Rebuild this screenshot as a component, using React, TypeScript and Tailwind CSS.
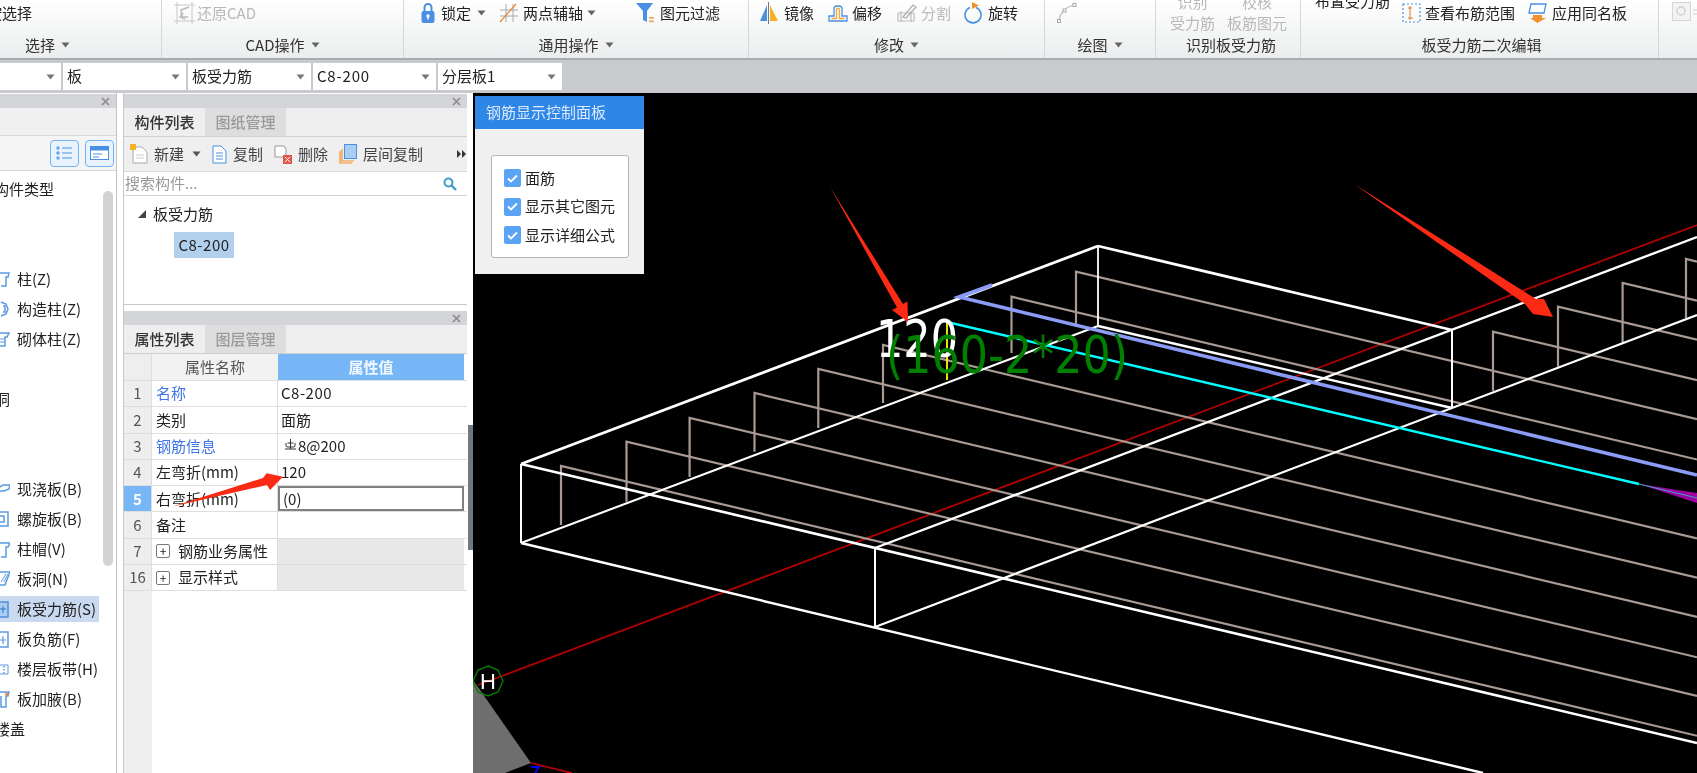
import React from "react";

const Caret = ({ c = "#666" }: { c?: string }) => (
  <svg width="9" height="6" viewBox="0 0 9 6" className="shrink-0"><path d="M0.5 0.5H8.5L4.5 5.5Z" fill={c} /></svg>
);

const Lock = () => (
  <svg width="14" height="22" viewBox="0 0 14 22"><path d="M3.5 10V5.5a3.5 3.5 0 0 1 7 0V10" fill="none" stroke="#4a90e2" strokeWidth="2" /><rect x="0.5" y="9" width="13" height="12" rx="2" fill="#4a90e2" /><circle cx="7" cy="14" r="1.7" fill="#fff" /><rect x="6.3" y="14" width="1.4" height="3.5" fill="#fff" /></svg>
);
const Axis = () => (
  <svg width="20" height="20" viewBox="0 0 20 20"><path d="M7 1V19M14 1V19M1 7H19M1 13H19" stroke="#a8a8a8" strokeWidth="1" /><path d="M1 19L17 1" stroke="#ef8a3c" strokeWidth="1.3" /></svg>
);
const Filter = () => (
  <svg width="20" height="22" viewBox="0 0 20 22"><path d="M0 1H17L11 9V20L7 18V9Z" fill="#4a90e2" /><rect x="13" y="15" width="5" height="1.6" fill="#f2a25c" /><rect x="13" y="18.5" width="5" height="1.6" fill="#f2a25c" /></svg>
);
const Mirror = () => (
  <svg width="20" height="22" viewBox="0 0 20 22"><path d="M8 3L1 19H8Z" fill="#4a90e2" /><path d="M11 3L19 19H11Z" fill="#f5b324" /><path d="M9.5 0V22" stroke="#777" strokeWidth="1" /></svg>
);
const Offset = () => (
  <svg width="20" height="20" viewBox="0 0 20 20"><path d="M1 18V13H6V6a3 3 0 0 1 3-3h2a3 3 0 0 1 3 3v7h5v5Z" fill="none" stroke="#4a90e2" strokeWidth="1.3" /><path d="M3.5 15.5H8.5V6.5a1 1 0 0 1 1-1h1a1 1 0 0 1 1 1v9h5" fill="none" stroke="#f2a93b" strokeWidth="1.3" /></svg>
);
const Split = () => (
  <svg width="22" height="20" viewBox="0 0 22 20"><path d="M2 10H18V18H2Z M5 8V19 M15 8V19" fill="none" stroke="#bdbdbd" strokeWidth="1.2" /><path d="M7 14L17 2L20 4L10 15Z" fill="none" stroke="#b0b0b0" strokeWidth="1.3" /></svg>
);
const Rotate = () => (
  <svg width="20" height="22" viewBox="0 0 20 22"><path d="M6 5.5a8 8 0 1 0 6 0" fill="none" stroke="#4a90e2" strokeWidth="1.6" /><path d="M8 0L15 3.5L8 7Z" fill="#f2922e" /></svg>
);
const Arc = () => (
  <svg width="22" height="22" viewBox="0 0 22 22"><path d="M3 18C4 11 10 5 17 3" fill="none" stroke="#bdbdbd" strokeWidth="1.2" /><g fill="#fff" stroke="#aaa"><rect x="1.5" y="17.5" width="3" height="3" /><rect x="7" y="7" width="3" height="3" /><rect x="17" y="1.5" width="3" height="3" /></g></svg>
);
const CadIcon = () => (
  <svg width="21" height="22" viewBox="0 0 21 22"><path d="M3 0V22M18 0V22M0 3H21M0 19H21" stroke="#c8c8c8" strokeWidth="1" /><path d="M15 5L7 8L8 15H14" fill="none" stroke="#bbb" strokeWidth="1.5" /><path d="M9 11L6 15L11 17" fill="none" stroke="#bbb" strokeWidth="1.5" /></svg>
);
const Range = () => (
  <svg width="19" height="20" viewBox="0 0 19 20"><rect x="1" y="1" width="17" height="18" fill="none" stroke="#4a90e2" strokeWidth="1.2" strokeDasharray="2 2" /><path d="M8 3V17M6 5H10M6 15H11" stroke="#d97b30" strokeWidth="1" /></svg>
);
const SameName = () => (
  <svg width="20" height="22" viewBox="0 0 20 22"><path d="M3 2H18L16 11H1Z" fill="#fff" stroke="#4a90e2" strokeWidth="1.3" /><path d="M5 13H14V16H18L9.5 21L2 16H5Z" fill="#f2922e" /></svg>
);

type ItemProps = { icon?: React.ReactNode; text: string; caret?: boolean; gray?: boolean; className?: string; gap?: string };
const Item = ({ icon, text, caret, gray, className = "", gap = "gap-[4px]" }: ItemProps) => (
  <div className={`flex h-[26px] shrink-0 items-center whitespace-nowrap ${gap} ${className}`}>
    {icon}
    <span className={gray ? "text-[#b9b9b9]" : "text-[#222]"}>{text}</span>
    {caret && <Caret />}
  </div>
);

const Group = ({ width, label, caret = true, children, className = "", labelClass = "" }: { width: string; label: string; caret?: boolean; children: React.ReactNode; className?: string; labelClass?: string }) => (
  <div className={`flex shrink-0 flex-col border-r border-[#d5d7d9] ${width} ${className}`}>
    <div className="flex h-[35px] items-start overflow-hidden">{children}</div>
    <div className={`flex h-[20px] items-center justify-center gap-[6px] text-[#333] ${labelClass}`}>
      <span>{label}</span>
      {caret && <Caret />}
    </div>
  </div>
);

const Ribbon = () => (
  <div className="flex h-[60px] shrink-0 overflow-hidden border-b-2 border-[#a9acae] bg-gradient-to-b from-white to-[#ebedee] text-[15px] leading-[20px]">
    <Group width="w-[228px]" label="选择" className="-ml-[66px]">
      <Item text="按选择" className="pl-[53px]" />
    </Group>
    <Group width="w-[242px]" label="CAD操作">
      <Item icon={<CadIcon />} text="还原CAD" gray gap="gap-[2px]" className="pl-[12px]" />
    </Group>
    <Group width="w-[345px]" label="通用操作">
      <Item icon={<Lock />} text="锁定" caret gap="gap-[6px]" className="pl-[17px]" />
      <Item icon={<Axis />} text="两点辅轴" caret gap="gap-[4px]" className="ml-[13px]" />
      <Item icon={<Filter />} text="图元过滤" className="ml-[40px]" />
    </Group>
    <Group width="w-[296px]" label="修改">
      <Item icon={<Mirror />} text="镜像" gap="gap-[5px]" className="pl-[10px]" />
      <Item icon={<Offset />} text="偏移" className="ml-[14px]" />
      <Item icon={<Split />} text="分割" gray gap="gap-[3px]" className="ml-[14px]" />
      <Item icon={<Rotate />} text="旋转" className="ml-[13px]" />
    </Group>
    <Group width="w-[111px]" label="绘图">
      <div className="pl-[11px] pt-[2px]"><Arc /></div>
    </Group>
    <Group width="w-[145px]" label="识别板受力筋" caret={false} labelClass="pl-[6px]">
      <div className="-mt-[9px] ml-[14px] flex w-[45px] flex-col items-center leading-[21px] text-[#b9b9b9]"><span>识别</span><span className="whitespace-nowrap">受力筋</span></div>
      <div className="-mt-[9px] ml-[12px] flex w-[60px] flex-col items-center leading-[21px] text-[#b9b9b9]"><span>校核</span><span className="whitespace-nowrap">板筋图元</span></div>
    </Group>
    <Group width="w-[358px]" label="板受力筋二次编辑" caret={false} labelClass="pl-[4px]">
      <div className="-mt-[9px] ml-[14px] w-[75px] shrink-0 whitespace-nowrap text-[#222]">布置受力筋</div>
      <Item icon={<Range />} text="查看布筋范围" className="ml-[12px]" />
      <Item icon={<SameName />} text="应用同名板" className="ml-[13px]" />
    </Group>
    <div className="flex-1 pl-[13px] pt-[2px]">
      <svg width="25" height="19" viewBox="0 0 25 19"><rect x="0.5" y="0.5" width="18" height="18" fill="#f3f3f3" stroke="#d5d5d5" /><circle cx="9" cy="9" r="4" fill="none" stroke="#d0d0d0" strokeWidth="1.5" /><path d="M21 8H25M21 12H25" stroke="#ccc" /></svg>
    </div>
  </div>
);

const Combo = ({ text, w, wide }: { text: string; w: string; wide?: boolean }) => (
  <div className={`flex h-[27px] shrink-0 items-center justify-between bg-white pl-[4px] pr-[6px] text-[15px] text-[#222] ${w}`}>
    <span className={wide ? "tracking-[0.8px]" : ""}>{text}</span>
    <Caret c="#777" />
  </div>
);

const ComboRow = () => (
  <div className="flex h-[33px] shrink-0 gap-[2px] bg-[#c8cacd] pt-[3px]">
    <Combo text="" w="w-[61px]" />
    <Combo text="板" w="w-[123px]" />
    <Combo text="板受力筋" w="w-[123px]" />
    <Combo text="C8-200" w="w-[123px]" wide />
    <Combo text="分层板1" w="w-[124px]" />
  </div>
);

const PanelHeader = () => (
  <div className="mt-[1px] flex h-[14px] shrink-0 items-center justify-end bg-[#d4d5d9] pr-[6px]">
    <svg width="9" height="9" viewBox="0 0 9 9"><path d="M1 1L8 8M8 1L1 8" stroke="#8a8a8a" strokeWidth="1.6" /></svg>
  </div>
);

const blue = { fill: "none", stroke: "#5b9ae0", strokeWidth: 1.5 };
const LeafIcon = ({ k }: { k: string }) => {
  const d: Record<string, React.ReactNode> = {
    col: <path d="M-3 3H9L8 7H6V16H1" {...blue} />,
    gz: <path d="M1 2L6 4L8 9L6 14L1 16M3 6H5V12H3" {...blue} />,
    brick: <g {...blue}><path d="M-2 3H9L7 7H5V16H-2" /><path d="M0 9H5M0 12H5" strokeWidth="1" /></g>,
    cast: <g {...blue}><path d="M-2 8L3 5H10L9 9L4 11H-2Z" /></g>,
    spiral: <g {...blue}><rect x="-4" y="2" width="12" height="14" /><rect x="-1" y="6" width="5" height="6" /></g>,
    cap: <path d="M-3 3H10L8 7H6V17H1" {...blue} />,
    hole: <g {...blue}><path d="M-2 2H10L5 15H-2Z" /><path d="M1 12L6 4M4 12L8 4" strokeWidth="1" /></g>,
    rebar: <g><rect x="-4" y="2" width="12" height="15" fill="#a9cdf3" stroke="#4f90d8" strokeWidth="1.5" /><path d="M0 9H6M3 6V13" stroke="#2f74c0" /></g>,
    neg: <g {...blue}><rect x="-4" y="2" width="12" height="15" /><path d="M0 10H6M3 6V14" strokeWidth="1.2" /></g>,
    band: <g {...blue}><path d="M-2 5H8V14H-2" strokeWidth="1" /><path d="M4 6V14" strokeDasharray="1.5 1.5" /></g>,
    add: <g><path d="M-3 2H9L8 6H6V17H1V6" {...blue} /><path d="M5 3H9L6 7Z" fill="#f2842e" /></g>,
  };
  return <svg width="10" height="18" viewBox="0 0 10 18" className="shrink-0">{d[k]}</svg>;
};

const treeRows: ([string, string] | null | string)[] = [
  "构件类型", null, null,
  ["柱(Z)", "col"], ["构造柱(Z)", "gz"], ["砌体柱(Z)", "brick"], null, "门窗洞", null, null,
  ["现浇板(B)", "cast"], ["螺旋板(B)", "spiral"], ["柱帽(V)", "cap"], ["板洞(N)", "hole"],
  ["板受力筋(S)", "rebar"], ["板负筋(F)", "neg"], ["楼层板带(H)", "band"], ["板加腋(B)", "add"], "楼盖",
];

const LeftPanel = () => (
  <div className="flex w-[117px] shrink-0 flex-col border-r border-[#c4c4c4] bg-white">
    <PanelHeader />
    <div className="h-[28px] shrink-0 border-b border-[#d9d9d9] bg-[#f0f0f0]" />
    <div className="flex h-[35px] shrink-0 items-center justify-end gap-[6px] border-b border-[#d9d9d9] bg-[#f5f5f5] pr-[2px]">
      <div className="flex h-[27px] w-[29px] items-center justify-center rounded-[4px] border border-[#74b4f5] bg-[#e9f3fd]">
        <svg width="17" height="14" viewBox="0 0 17 14"><path d="M6 2H16M6 7H16M6 12H16" stroke="#4a90e2" /><path d="M1 1h2v2H1zM1 6h2v2H1zM1 11h2v2H1z" fill="none" stroke="#4a90e2" /></svg>
      </div>
      <div className="flex h-[27px] w-[29px] items-center justify-center rounded-[4px] border border-[#74b4f5] bg-[#e9f3fd]">
        <svg width="19" height="14" viewBox="0 0 19 14"><rect x="0.5" y="0.5" width="18" height="13" fill="#fff" stroke="#4a90e2" /><rect x="0.5" y="0.5" width="18" height="4" fill="#4a90e2" /><path d="M3 8H12M3 11H9" stroke="#4a90e2" /></svg>
      </div>
    </div>
    <div className="relative flex-1 overflow-hidden pt-[3px] text-[15px] leading-[30px] text-[#222]">
      {treeRows.map((r, i) =>
        r === null ? (
          <div key={i} className="h-[30px]" />
        ) : typeof r === "string" ? (
          <div key={i} className="flex h-[30px] items-center justify-end whitespace-nowrap" style={{ width: r === "构件类型" ? 54 : r === "楼盖" ? 25 : 10 }}>
            <span>{r}</span>
          </div>
        ) : (
          <div key={i} className="flex h-[30px] items-center">
            <div className={`flex h-[26px] w-[99px] items-center gap-[7px] whitespace-nowrap ${r[1] === "rebar" ? "bg-[#c9daf0]" : ""}`}>
              <LeafIcon k={r[1]} />
              <span>{r[0]}</span>
            </div>
          </div>
        )
      )}
      <div className="absolute left-[103px] top-[20px] h-[375px] w-[10px] rounded-[5px] bg-[#d3d3d3]" />
    </div>
  </div>
);

const Tabs = ({ a, b }: { a: string; b: string }) => (
  <div className="flex h-[29px] shrink-0 items-stretch border-b border-[#cfcfcf] bg-[#eeeeee] text-[15px] font-medium">
    <div className="flex w-[81px] items-center justify-center text-[#333]">{a}</div>
    <div className="flex w-[81px] items-center justify-center bg-[#dedede] text-[#999]">{b}</div>
  </div>
);

const Tool = ({ icon, text, className = "" }: { icon: React.ReactNode; text: string; className?: string }) => (
  <div className={`flex shrink-0 items-center gap-[6px] whitespace-nowrap ${className}`}>
    {icon}
    <span>{text}</span>
  </div>
);

const ListPanel = () => (
  <div className="flex h-[212px] shrink-0 flex-col border-b border-[#c8c8c8] bg-white">
    <PanelHeader />
    <Tabs a="构件列表" b="图纸管理" />
    <div className="flex h-[35px] shrink-0 items-center overflow-hidden border-b border-[#d9d9d9] bg-[#efefef] pl-[6px] text-[15px] text-[#444]">
      <div className="flex shrink-0 items-center whitespace-nowrap">
        <svg width="18" height="20" viewBox="0 0 18 20"><path d="M3 3H12L17 8V19H3Z" fill="#fff" stroke="#aaa" /><rect x="0" y="0" width="6" height="6" fill="#f5b324" /><path d="M6 11H14M6 14H14" stroke="#ccc" /></svg>
        <span className="ml-[6px]">新建</span>
        <span className="ml-[8px]"><Caret c="#555" /></span>
      </div>
      <Tool className="ml-[10px]" icon={<svg width="16" height="19" viewBox="0 0 16 19"><path d="M2 1H10L15 6V18H2Z" fill="#fff" stroke="#4a90e2" /><path d="M5 8H12M5 11H12M5 14H12" stroke="#4a90e2" /></svg>} text="复制" />
      <Tool className="ml-[11px]" icon={<svg width="18" height="19" viewBox="0 0 18 19"><path d="M1 1H10L12 4V12H1Z" fill="#fff" stroke="#999" /><rect x="9" y="10" width="9" height="9" fill="#e2574c" /><path d="M11 12L16 17M16 12L11 17" stroke="#fff" /></svg>} text="删除" />
      <Tool className="ml-[11px]" icon={<svg width="18" height="20" viewBox="0 0 18 20"><path d="M1 7V19H13" fill="none" stroke="#f2922e" strokeWidth="1.2" /><path d="M3 5V17H15" fill="none" stroke="#f2922e" strokeWidth="1.2" /><rect x="5.5" y="0.5" width="12" height="14" fill="#a9cdf3" stroke="#4a90e2" /></svg>} text="层间复制" />
      <svg width="9" height="8" viewBox="0 0 9 8" className="ml-[34px] shrink-0"><path d="M0 0L4 4L0 8ZM5 0L9 4L5 8Z" fill="#333" /></svg>
    </div>
    <div className="flex h-[24px] shrink-0 items-center justify-between border-b border-[#d4d4d4] pl-[1px] pr-[10px] text-[15px] text-[#9a9a9a]">
      <span>搜索构件...</span>
      <svg width="14" height="14" viewBox="0 0 14 14"><circle cx="5.5" cy="5.5" r="4" fill="none" stroke="#3f9ccb" strokeWidth="2" /><path d="M8.5 8.5L13 13" stroke="#3f9ccb" strokeWidth="2.4" /></svg>
    </div>
    <div className="flex flex-1 flex-col pl-[14px] text-[15px] text-[#222]">
      <div className="mt-[4px] flex h-[28px] items-center gap-[7px]">
        <svg width="8" height="8" viewBox="0 0 8 8"><path d="M8 0V8H0Z" fill="#444" /></svg>
        <span>板受力筋</span>
      </div>
      <div className="ml-[36px] mt-[4px] flex h-[26px] w-[60px] items-center justify-center bg-[#b3cfee] tracking-[0.5px]">C8-200</div>
    </div>
  </div>
);

const rows = [
  { n: "1", name: "名称", val: "C8-200", link: true },
  { n: "2", name: "类别", val: "面筋" },
  { n: "3", name: "钢筋信息", val: "8@200", link: true, bar: true },
  { n: "4", name: "左弯折(mm)", val: "120" },
  { n: "5", name: "右弯折(mm)", val: "(0)", sel: true },
  { n: "6", name: "备注", val: "" },
  { n: "7", name: "钢筋业务属性", val: "", more: true },
  { n: "16", name: "显示样式", val: "", more: true },
];

const PropPanel = () => (
  <div className="mt-[5px] flex min-h-0 flex-1 flex-col bg-white">
    <PanelHeader />
    <Tabs a="属性列表" b="图层管理" />
    <div className="relative flex min-h-0 flex-1 flex-col text-[15px] text-[#222]">
      <div className="absolute bottom-0 left-0 top-0 w-[28px] bg-[#eeeeee]" />
      <div className="relative flex h-[27px] shrink-0 border-b border-[#dedede]">
        <div className="w-[28px] shrink-0 border-r border-[#dedede]" />
        <div className="flex w-[126px] shrink-0 items-center justify-center bg-[#f2f2f2] text-[#555]">属性名称</div>
        <div className="flex w-[186px] shrink-0 items-center justify-center bg-[#78b7f7] font-bold text-[#f2f8ff]">属性值</div>
      </div>
      {rows.map((r) => (
        <div key={r.n} className="relative flex h-[26.3px] shrink-0 border-b border-[#dedede]">
          <div className={`flex w-[28px] shrink-0 items-center justify-center border-r border-[#dedede] ${r.sel ? "bg-[#78b7f7] font-bold text-white" : "text-[#555]"}`}>{r.n}</div>
          <div className={`flex w-[126px] shrink-0 items-center gap-[8px] whitespace-nowrap border-r border-[#dedede] pl-[4px] ${r.link ? "text-[#3f74e8]" : ""}`}>
            {r.more && (
              <span className="flex h-[14px] w-[14px] items-center justify-center rounded-[2px] border border-[#777] text-[12px] leading-none">+</span>
            )}
            <span>{r.name}</span>
          </div>
          <div className={`flex w-[186px] shrink-0 items-center pl-[3px] ${r.val === "C8-200" ? "tracking-[0.5px]" : ""} ${r.more ? "bg-[#e8e8e8]" : ""} ${r.sel ? "border-2 border-[#808080] pl-[2px]" : ""}`}>
            {r.bar && (
              <svg width="13" height="12" viewBox="0 0 13 12" className="-mt-[3px] mr-[1px] ml-[3px]"><path d="M6.5 0V10M1 10H12M2 4V7a2 2 0 0 0 2 1H9a2 2 0 0 0 2-1V4M3.5 4H9.5" fill="none" stroke="#333" strokeWidth="1" /></svg>
            )}
            {r.val}
          </div>
        </div>
      ))}
    </div>
  </div>
);

const rebars: [number, number, number][] = [
  [561, 466, 525], [626.5, 441.7, 501.7], [689.6, 418, 477], [754.5, 393, 451.7], [818.3, 369, 428], [883, 345, 403], [1011.5, 296.7, 353], [1076, 271.7, 327],
  [1493, 331.7, 390.7], [1558, 306.7, 366.7], [1622.6, 283, 342.7], [1686, 259, 318],
];

const whites: [number, number, number, number, number][] = [
  [1098, 246, 521, 464, 2.8], [521, 464, 521, 543, 2], [521, 543, 1483, 773, 2.4], [521, 464, 1697, 743, 2.6],
  [875, 548, 875, 627, 2], [875, 627, 1697, 315, 2.2], [521, 543, 1098, 326, 2.1], [875, 548, 1697, 237, 2.4],
  [1098, 246, 1452, 330, 2.8], [1098, 246, 1098, 326, 1.8], [1452, 330, 1452, 408, 2], [1098, 326, 1452, 408, 2.4],
];

const Scene = () => (
  <svg viewBox="473 93 1224 680" className="absolute inset-0 h-full w-full">
    <path d="M473 680L531 763L505 773H473Z" fill="#6e6e6e" />
    <path d="M478 685L1697 225" stroke="#b00000" strokeWidth="1.8" />
    <path d="M531 763L572 773" stroke="#c00000" strokeWidth="1.8" />
    <path d="M531 767H539L535 773" fill="none" stroke="#0000ff" strokeWidth="1.8" />
    {rebars.map(([x, t, b]) => (
      <path key={x} d={`M${x} ${b}V${t}L1697 ${t + (1697 - x) * 0.2375}`} fill="none" stroke="#a89a92" strokeWidth="2.2" />
    ))}
    {whites.map(([a, b, c, d, w], i) => (
      <path key={i} d={`M${a} ${b}L${c} ${d}`} stroke="#fff" strokeWidth={w} />
    ))}
    <path d="M992 285L959 297L1697 475" fill="none" stroke="#8a9cf5" strokeWidth="3.6" />
    <path d="M947 322L1639 484" stroke="#00ffff" strokeWidth="2.4" />
    <path d="M1639 484L1697 493V503Z" fill="#a000a0" />
    <path d="M1639 484L1697 498" stroke="#35a8c8" strokeWidth="1" />
    <path d="M947 323V380" stroke="#ffff00" strokeWidth="1.8" />
    <text x="876" y="357" fill="#fff" fontSize="51" textLength="82" lengthAdjust="spacingAndGlyphs" style={{ fontFamily: "'DejaVu Sans',sans-serif" }}>120</text>
    <text x="886" y="373" fill="#008000" fontSize="52" textLength="242" lengthAdjust="spacingAndGlyphs" style={{ fontFamily: "'DejaVu Sans',sans-serif" }}>(160-2*20)</text>
    <path d="M830 187L903 304L907.5 301.5L908 322L892 310L897 307.5Z" fill="#fb2a14" />
    <path d="M1354 184L1536 299L1544 299L1553 317L1533 314L1525 304Z" fill="#fb2a14" />
    <path d="M488 666L498 670L503 681L498 692L488 696L478 692L473 681L478 670Z" fill="none" stroke="#0a7a0a" strokeWidth="1.4" />
    <text x="488" y="689" fill="#fff" fontSize="22" textAnchor="middle" style={{ fontFamily: "'Liberation Sans',sans-serif" }}>H</text>
  </svg>
);

const Check = ({ text }: { text: string }) => (
  <div className="flex h-[28.5px] items-center gap-[4px]">
    <span className="flex h-[18px] w-[17px] items-center justify-center rounded-[2px] bg-[#5ba4f5]">
      <svg width="11" height="9" viewBox="0 0 11 9"><path d="M1 4.5L4 7.5L10 1.5" fill="none" stroke="#fff" strokeWidth="1.8" /></svg>
    </span>
    <span className="whitespace-nowrap text-[15px] text-[#222]">{text}</span>
  </div>
);

const ControlPanel = () => (
  <div className="absolute left-[2px] top-[3px] flex h-[178px] w-[169px] flex-col bg-[#f0f0f0]">
    <div className="flex h-[33px] shrink-0 items-center bg-[#2e86e6] pl-[11px] text-[15px] text-[#dbe9fb]">钢筋显示控制面板</div>
    <div className="ml-[16px] mt-[26px] flex h-[103px] w-[138px] flex-col justify-center rounded-[3px] border border-[#b5b5b5] bg-white pl-[12px]">
      <Check text="面筋" />
      <Check text="显示其它图元" />
      <Check text="显示详细公式" />
    </div>
  </div>
);

export default function App() {
  return (
    <div className="relative flex h-[773px] w-[1697px] flex-col overflow-hidden bg-white blur-[0.35px] [font-family:'Noto_Sans_CJK_SC','Noto_Sans',sans-serif]">
      <Ribbon />
      <ComboRow />
      <div className="flex min-h-0 flex-1">
        <LeftPanel />
        <div className="flex w-[350px] shrink-0 pl-[6px]">
          <div className="flex w-[344px] shrink-0 flex-col border-l border-[#c8c8c8]">
            <ListPanel />
            <PropPanel />
          </div>
        </div>
        <div className="flex w-[6px] shrink-0 flex-col bg-white">
          <div className="ml-[1px] mt-[332px] h-[125px] w-[5px] bg-[#6f7780]" />
        </div>
        <div className="relative min-w-0 flex-1 bg-black">
          <Scene />
          <ControlPanel />
        </div>
      </div>
      <svg viewBox="171 470 115 40" className="absolute left-[171px] top-[470px] h-[40px] w-[115px]">
        <path d="M171.7 506.7L263 478L266.7 473.3L283 476.7L270 490L267 485Z" fill="#fb2a14" />
      </svg>
    </div>
  );
}
